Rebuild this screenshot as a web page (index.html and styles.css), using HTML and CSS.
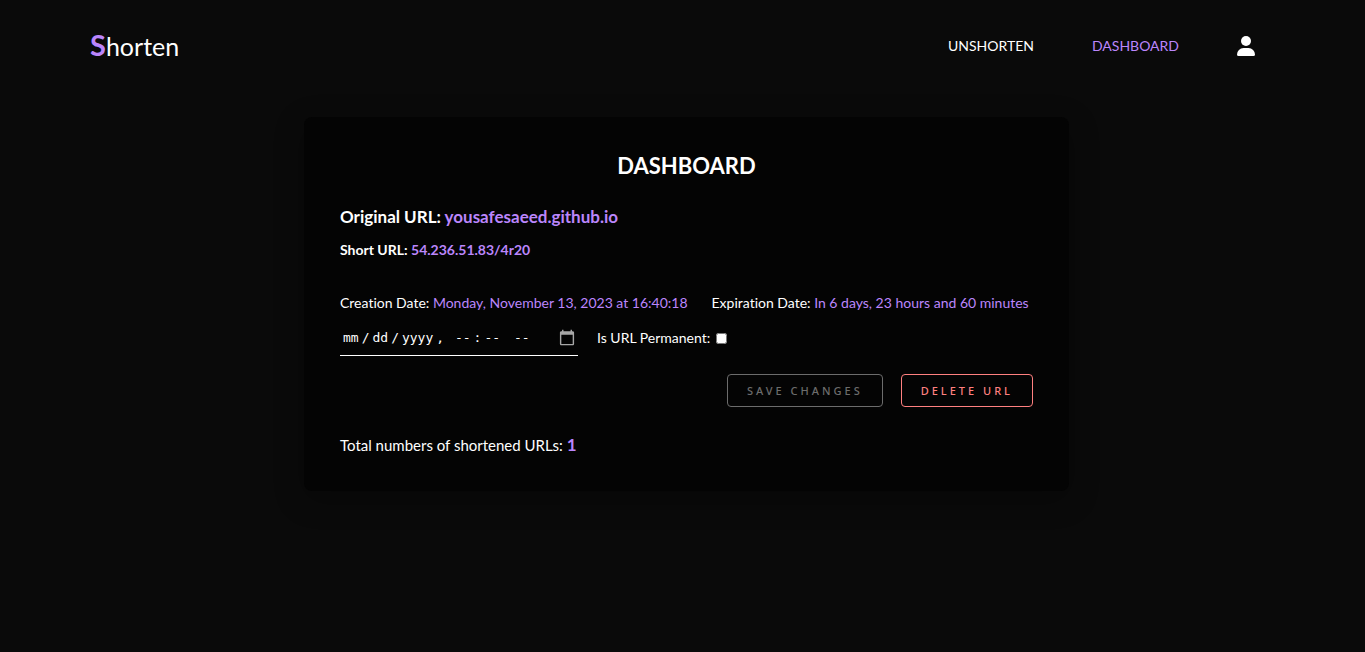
FILE: index.html
```html
<!DOCTYPE html>
<html lang="en">
<head>
<meta charset="utf-8">
<meta name="viewport" content="width=device-width, initial-scale=1">
<title>Shorten</title>
<link rel="stylesheet" href="styles.css">
</head>
<body>
<header class="header">
  <a class="logo" href="#"><span class="logo-initial">S</span>horten</a>
  <nav class="nav">
    <a class="nav-link" href="#">UNSHORTEN</a>
    <a class="nav-link active" href="#">DASHBOARD</a>
    <a class="nav-link user" href="#" aria-label="Account">
      <svg width="18" height="20" viewBox="0 0 18 20" fill="currentColor" aria-hidden="true">
        <circle cx="9" cy="5" r="5"/>
        <path d="M0 18.500A6.500 6.500 0 0 1 6.500 12H11.500A6.500 6.500 0 0 1 18 18.500Q18 20 16.500 20H1.500Q0 20 0 18.500Z"/>
      </svg>
    </a>
  </nav>
</header>
<main class="main">
  <section class="card">
    <h1 class="title">DASHBOARD</h1>
    <h2 class="original">Original URL: <a href="#">yousafesaeed.github.io</a></h2>
    <h3 class="short">Short URL: <a href="#">54.236.51.83/4r20</a></h3>
    <div class="dates">
      <p>Creation Date: <span class="accent">Monday, November 13, 2023 at 16:40:18</span></p>
      <p>Expiration Date: <span class="accent">In 6 days, 23 hours and 60 minutes</span></p>
    </div>
    <form class="form">
      <div class="fields">
        <input class="date" type="datetime-local" aria-label="Expiration date">
        <label class="permanent" for="permanent">Is URL Permanent: <input class="check" type="checkbox" id="permanent"></label>
      </div>
      <div class="actions">
        <button class="button" type="submit" disabled>SAVE CHANGES</button>
        <button class="button danger" type="button">DELETE URL</button>
      </div>
    </form>
    <p class="total">Total numbers of shortened URLs: <strong class="accent">1</strong></p>
  </section>
</main>
</body>
</html>
```
FILE: styles.css
```css
* { box-sizing: border-box; margin: 0; padding: 0; }
body {
  min-height: 100vh;
  background: #0a0a0a;
  color: #fff;
  font: 14px/20px Lato, sans-serif;
  font-variant-ligatures: none;
}
a { color: #bb86fc; text-decoration: none; }
.accent { color: #bb86fc; }
.header {
  display: flex;
  align-items: center;
  justify-content: space-between;
  padding: 27px 110px 28px 90px;
}
.logo { color: #fff; font-size: 25px; line-height: 36px; }
.logo-initial { color: #bb86fc; font-size: 29px; font-weight: 700; }
.nav { display: flex; align-items: center; gap: 58px; }
.nav-link { color: #fff; }
.nav-link.active { color: #bb86fc; }
.user svg { display: block; }
.main { display: flex; justify-content: center; padding: 25px 18px 25px 26px; }
.card {
  width: 765px;
  padding: 36px;
  border-radius: 8px;
  background: #040404;
  box-shadow: 0 8px 30px rgba(0, 0, 0, 0.3);
}
.title { font-size: 22px; line-height: 26px; text-align: center; }
.original { margin-top: 27px; font-size: 17px; line-height: 22px; }
.short { margin-top: 12px; font-size: 14px; line-height: 20px; }
.dates { display: flex; flex-wrap: wrap; column-gap: 24px; margin-top: 33px; }
.fields { display: flex; align-items: center; gap: 19px; margin-top: 7px; }
.date {
  width: 238px;
  height: 36px;
  border: 0;
  border-bottom: 1px solid #fff;
  background: transparent;
  color: #fff;
  color-scheme: dark;
  font: 13px "DejaVu Sans Mono", monospace;
}
.date::-webkit-datetime-edit-month-field,
.date::-webkit-datetime-edit-day-field,
.date::-webkit-datetime-edit-year-field,
.date::-webkit-datetime-edit-hour-field,
.date::-webkit-datetime-edit-minute-field,
.date::-webkit-datetime-edit-ampm-field { padding: 0 3px; }
.date::-webkit-calendar-picker-indicator { width: 18px; height: 18px; opacity: 0.65; }
.permanent { display: flex; align-items: center; gap: 6px; }
.check { width: 11px; height: 11px; }
.actions { display: flex; justify-content: flex-end; gap: 18px; margin-top: 18px; }
.button {
  height: 33px;
  padding: 0 19px;
  border: 1px solid currentColor;
  border-radius: 4px;
  background: transparent;
  color: #ff8080;
  font: 500 11px "Noto Sans", sans-serif;
  letter-spacing: 3px;
}
.button:disabled { color: #6c6c6c; }
.total { margin-top: 28px; font-size: 15px; line-height: 20px; }
.total strong { font-size: 17px; }
```
